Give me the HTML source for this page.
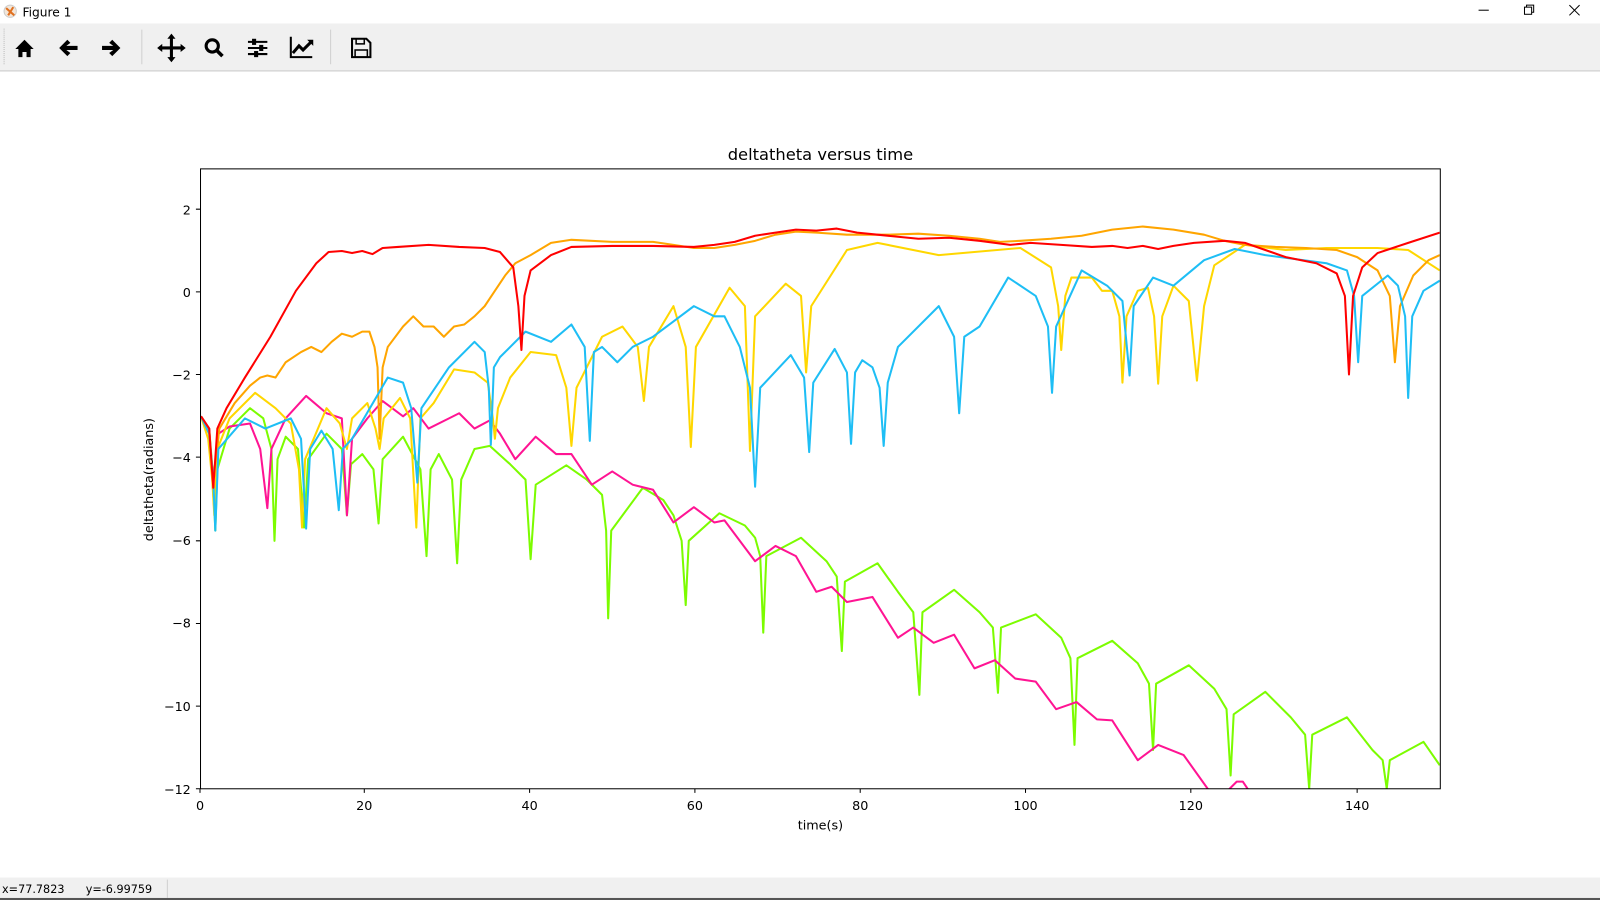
<!DOCTYPE html>
<html><head><meta charset="utf-8"><style>
html,body{margin:0;padding:0;width:1600px;height:900px;overflow:hidden;background:#fff}
svg{display:block}
text{font-family:"DejaVu Sans","Liberation Sans",sans-serif}
</style></head><body>
<svg width="1600" height="900" viewBox="0 0 1568 882" xmlns="http://www.w3.org/2000/svg">
<rect x="0" y="0" width="1568" height="23" fill="#fff"/>
<circle cx="10" cy="11" r="6" fill="#f3e6d8" stroke="#ccc"/>
<path d="M6 8 L14 15 M8 15 L13 7" stroke="#e07020" stroke-width="2"/>
<text x="22" y="16" font-size="12" fill="#000">Figure 1</text>
<path d="M1449 10h10" stroke="#000"/>
<rect x="1494" y="7" width="7" height="7" fill="none" stroke="#000"/><path d="M1496 7v-2h7v7h-2" fill="none" stroke="#000"/>
<path d="M1538 5l10 10M1548 5l-10 10" stroke="#000"/>
<rect x="0" y="23" width="1568" height="46" fill="#f0f0f0"/>
<rect x="0" y="69" width="1568" height="1" fill="#c8c8c8"/>
<path d="M4 28v36" stroke="#bbb" stroke-dasharray="1 1"/>
<path d="M139 29v34M324 29v34" stroke="#d0d0d0"/>
<path d="M15 48 L24 39 L33 48 L30 48 L30 56 L26 56 L26 51 L22 51 L22 56 L18 56 L18 48Z" fill="#000"/>
<path d="M58 47 L66 39 L69 42 L65 45 L76 45 L76 49 L65 49 L69 52 L66 55Z" fill="#000"/>
<path d="M118 47 L110 39 L107 42 L111 45 L100 45 L100 49 L111 49 L107 52 L110 55Z" fill="#000"/>
<path d="M168 35v24M156 47h24" stroke="#000" stroke-width="3"/>
<path d="M168 33l-4 5h8zM168 61l-4-5h8zM154 47l5-4v8zM182 47l-5-4v8z" fill="#000"/>
<circle cx="208" cy="45" r="6" fill="none" stroke="#000" stroke-width="3"/><path d="M212 49l6 6" stroke="#000" stroke-width="3.5"/>
<path d="M243 41h19M243 47h19M243 53h19" stroke="#000" stroke-width="2"/>
<rect x="247" y="38" width="4" height="6" fill="#000"/><rect x="254" y="44" width="4" height="6" fill="#000"/><rect x="249" y="50" width="4" height="6" fill="#000"/>
<path d="M285 36v20h21" stroke="#000" stroke-width="2" fill="none"/>
<path d="M287 52l6-7 4 4 8-8" stroke="#000" stroke-width="3" fill="none"/><path d="M301 39h6v6z" fill="#000"/>
<path d="M345 38h14l4 4v14h-18z" fill="none" stroke="#000" stroke-width="2"/>
<rect x="349" y="38" width="8" height="5" fill="none" stroke="#000" stroke-width="1.5"/><rect x="348" y="49" width="12" height="7" fill="none" stroke="#000" stroke-width="1.5"/>
<text x="804" y="157" font-size="16" text-anchor="middle" fill="#000">deltatheta versus time</text>
<g font-size="12.5" fill="#000">
<g text-anchor="middle">
<text x="196" y="794">0</text><text x="357" y="794">20</text><text x="519" y="794">40</text><text x="681" y="794">60</text><text x="843" y="794">80</text><text x="1005" y="794">100</text><text x="1167" y="794">120</text><text x="1330" y="794">140</text>
</g>
<g text-anchor="end">
<text x="187" y="210">2</text><text x="187" y="291">0</text><text x="187" y="372">−2</text><text x="187" y="453">−4</text><text x="187" y="534">−6</text><text x="187" y="615">−8</text><text x="187" y="697">−10</text><text x="187" y="778">−12</text>
</g>
<text x="804" y="813" text-anchor="middle">time(s)</text>
<text transform="translate(150,470) rotate(-90)" text-anchor="middle">deltatheta(radians)</text>
</g>
<g stroke="#000" stroke-width="1">
<path d="M196 773v4M357 773v4M519 773v4M681 773v4M843 773v4M1005 773v4M1167 773v4M1330 773v4"/>
<path d="M196 205h-4M196 286h-4M196 367h-4M196 448h-4M196 530h-4M196 611h-4M196 692h-4M196 773h-4"/>
</g>
<defs><clipPath id="c"><rect x="196" y="165" width="1215" height="608"/></clipPath></defs>
<g clip-path="url(#c)" fill="none" stroke-width="2" stroke-linejoin="round">
<polyline stroke="#7cfc00" points="197,408 205,420 209,470 211,520 213,460 225,420 245,400 258,410 266,440 269,530 272,450 280,428 292,440 298,517 302,450 320,425 335,440 340,505 344,455 355,445 366,460 371,513 375,450 395,428 412,460 418,545 422,460 430,445 443,470 448,552 452,470 465,440 480,437 500,455 515,470 520,548 525,475 555,456 575,470 590,485 594,520 596,606 599,520 630,478 650,490 660,505 668,530 672,593 675,530 705,503 730,515 740,527 745,545 748,620 751,545 785,527 810,550 820,565 825,638 828,570 860,552 880,580 895,600 901,681 904,600 935,578 960,600 973,615 978,679 981,615 1015,602 1040,625 1049,645 1053,730 1056,645 1090,628 1115,650 1126,670 1130,735 1133,670 1165,652 1190,675 1202,695 1206,760 1209,700 1240,678 1265,703 1279,720 1283,773 1286,720 1320,703 1345,735 1355,745 1359,773 1362,745 1395,727 1411,750"/>
<polyline stroke="#ff1493" points="197,408 205,420 210,500 214,425 225,418 245,415 255,440 262,498 266,440 280,410 300,388 320,405 335,410 340,505 345,430 360,410 375,393 395,408 405,400 420,420 440,410 450,405 465,420 480,412 490,425 505,450 525,428 545,445 560,445 580,475 600,462 620,475 640,480 660,512 680,497 700,512 710,510 740,550 760,535 780,545 800,580 815,575 830,590 855,585 880,625 895,615 915,630 935,622 955,655 975,647 995,665 1015,668 1035,695 1055,688 1075,705 1090,706 1115,745 1135,730 1160,740 1185,775"/>
<polyline stroke="#ff1493" points="1203,775 1212,766 1218,766 1224,775"/>
<polyline stroke="#ffd700" points="197,408 204,430 208,470 210,505 213,440 225,410 250,385 270,400 285,415 293,460 296,517 299,450 320,400 333,415 340,440 345,410 360,395 368,420 372,440 376,410 392,390 402,410 408,517 412,410 425,395 445,362 465,365 478,375 483,410 485,430 488,400 500,370 520,345 545,348 555,380 560,437 565,380 590,330 610,320 625,340 631,393 636,340 660,300 672,340 677,438 682,340 715,282 730,300 735,442 740,310 770,278 785,290 790,365 795,300 830,245 860,238 920,250 1000,243 1030,262 1037,300 1040,343 1044,290 1050,272 1070,272 1080,285 1090,285 1097,310 1100,375 1104,310 1115,285 1125,282 1131,310 1135,376 1139,310 1150,280 1165,295 1173,373 1180,300 1190,260 1220,240 1260,245 1300,243 1350,243 1380,245 1411,265"/>
<polyline stroke="#ffa500" points="197,408 205,425 209,470 215,420 230,395 245,378 255,370 262,368 270,370 280,355 295,345 305,340 315,345 325,335 335,327 345,330 355,325 362,325 367,340 370,360 372,430 375,360 380,340 395,320 405,310 415,320 425,320 435,330 445,320 455,318 465,310 475,300 485,285 495,270 505,258 520,250 540,238 560,235 600,237 640,237 660,240 680,243 700,243 720,240 740,236 760,230 780,227 800,228 830,230 870,230 900,229 930,231 960,234 980,237 1000,236 1030,234 1060,231 1090,225 1120,222 1150,225 1180,230 1200,236 1220,240 1250,242 1280,243 1310,245 1330,252 1350,265 1362,290 1367,355 1372,300 1385,270 1400,255 1411,250"/>
<polyline stroke="#1ebef5" points="197,408 205,425 209,470 211,520 214,440 240,410 260,420 285,410 295,430 300,518 304,440 315,422 326,440 332,500 336,440 345,430 380,370 395,375 403,400 409,473 413,400 440,360 465,335 475,345 479,380 481,436 484,360 490,350 515,325 540,335 560,318 573,340 578,432 582,345 590,340 605,355 620,340 640,330 660,315 680,300 700,310 710,310 725,340 735,380 740,477 745,380 775,348 788,370 793,443 797,375 818,342 830,365 834,435 838,365 845,353 855,360 862,380 866,437 870,375 880,340 920,300 935,330 940,405 945,330 960,320 988,272 1015,290 1027,320 1031,385 1035,320 1060,265 1085,280 1100,295 1107,368 1111,300 1130,272 1150,280 1180,255 1210,244 1240,250 1300,258 1320,265 1327,290 1331,355 1335,290 1360,270 1370,280 1377,310 1380,390 1384,310 1395,285 1411,275"/>
<polyline stroke="#ff0000" points="197,408 205,420 209,478 213,420 222,400 240,370 265,330 290,285 310,258 322,247 335,246 345,248 355,246 365,249 375,243 390,242 420,240 450,242 475,243 490,247 503,262 508,300 511,343 514,290 520,265 540,250 560,242 600,241 640,241 680,242 700,240 720,237 740,231 760,228 780,225 800,226 820,224 840,228 860,230 880,232 900,234 930,233 960,236 990,240 1010,238 1040,240 1070,242 1090,241 1105,243 1120,241 1135,244 1150,241 1170,238 1200,236 1220,238 1240,245 1260,252 1290,258 1310,268 1318,290 1322,367 1326,290 1335,262 1350,248 1380,238 1411,228"/>
</g>
<rect x="196.5" y="165.5" width="1215" height="607.5" fill="none" stroke="#000" stroke-width="1"/>
<rect x="0" y="860" width="1568" height="20" fill="#f0f0f0"/>
<rect x="0" y="880" width="1568" height="2" fill="#555"/>
<path d="M164 862v18" stroke="#d0d0d0"/>
<text x="2" y="875" font-size="11" fill="#000">x=77.7823</text>
<text x="84" y="875" font-size="11" fill="#000">y=-6.99759</text>
</svg>
</body></html>
